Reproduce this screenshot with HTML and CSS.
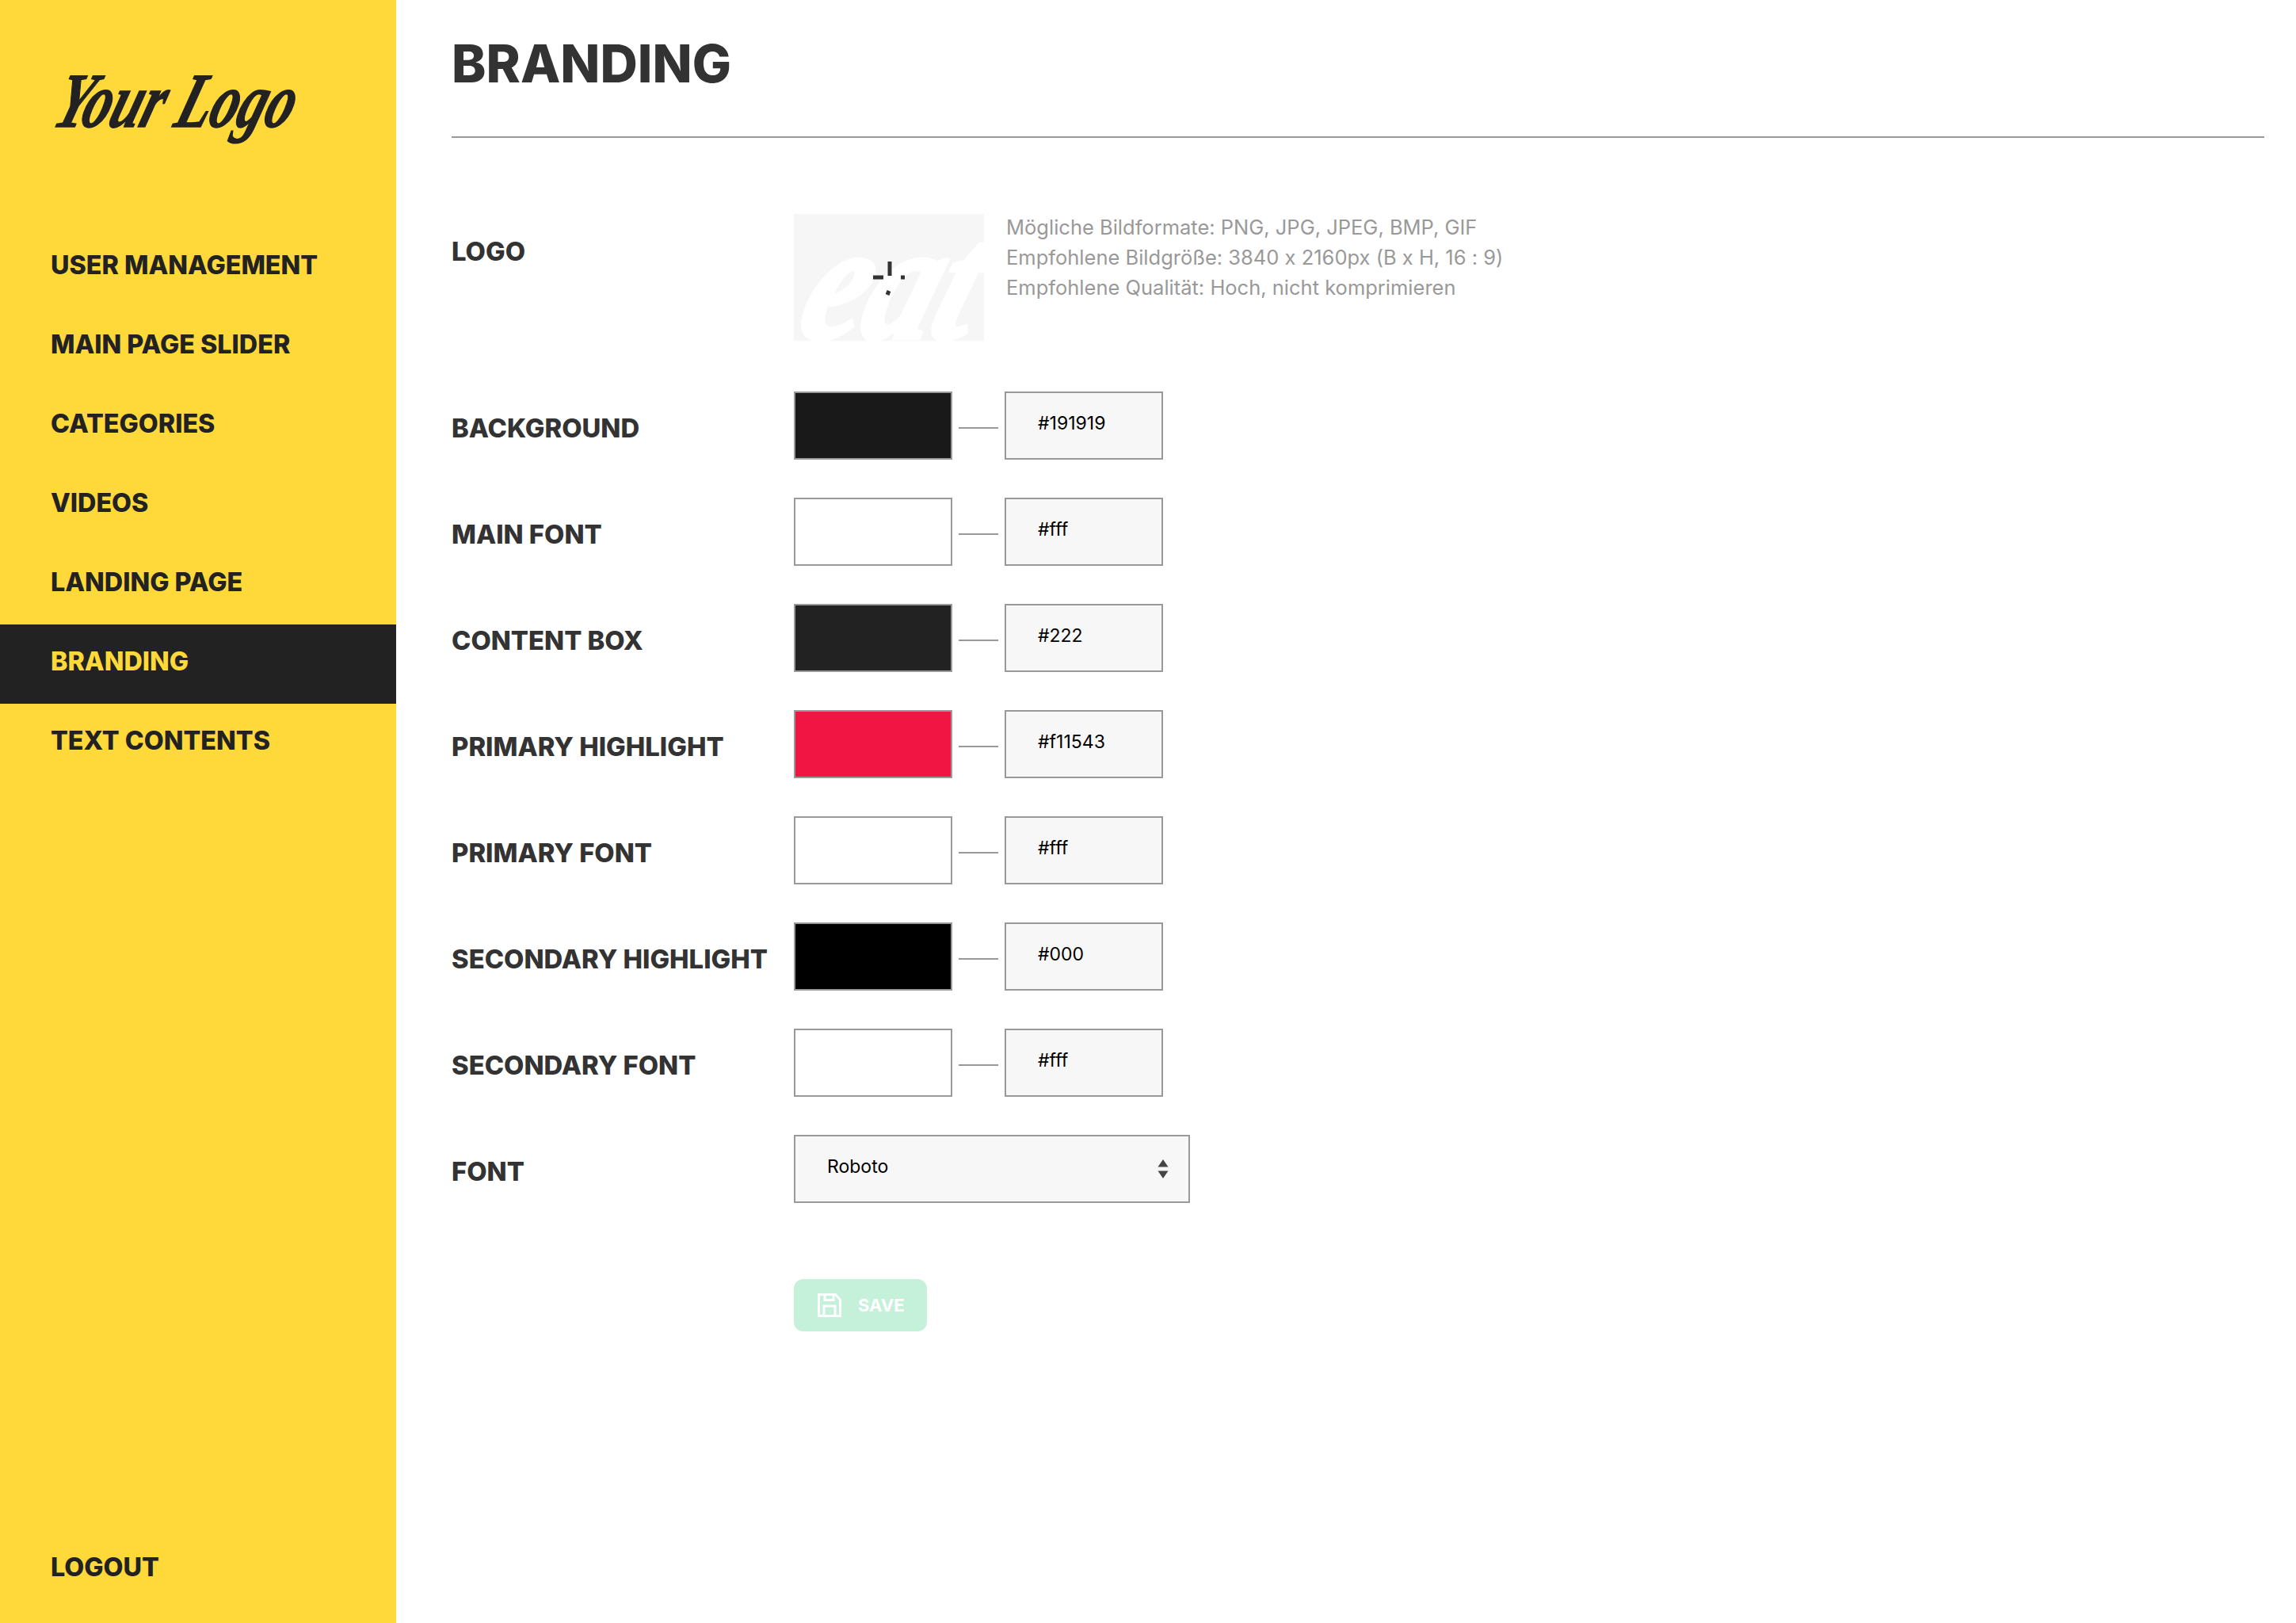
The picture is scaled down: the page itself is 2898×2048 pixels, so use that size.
FILE: index.html
```html
<!DOCTYPE html>
<html lang="de">
<head>
    <meta charset="UTF-8">
    <title>Branding</title>
    <link rel="stylesheet" href="styles.css">
</head>
<body>
    <aside class="sidebar">
        <div class="logo">
            <svg width="500" height="150" viewBox="0 0 500 150">
                <text class="logo-text" transform="translate(64 90) skewX(-18)" textLength="300" lengthAdjust="spacingAndGlyphs">Your Logo</text>
            </svg>
        </div>
        <nav class="menu">
            <a href="#">USER MANAGEMENT</a>
            <a href="#">MAIN PAGE SLIDER</a>
            <a href="#">CATEGORIES</a>
            <a href="#">VIDEOS</a>
            <a href="#">LANDING PAGE</a>
            <a href="#" class="active">BRANDING</a>
            <a href="#">TEXT CONTENTS</a>
        </nav>
        <a href="#" class="logout">LOGOUT</a>
    </aside>

    <main class="content">
        <header class="page-header">
            <h1>BRANDING</h1>
        </header>

        <div class="form">
            <div class="row row-logo">
                <div class="label">LOGO</div>
                <div class="logo-preview">
                    <svg width="240" height="160" viewBox="0 0 240 160">
                        <rect width="240" height="160" fill="#f6f6f6"/>
                        <text class="preview-text" transform="translate(0 156) skewX(-18) scale(1.1 1.3)">eat</text>
                        <path d="M121 60v18M100 80h13M135 80h5M120 97l-2 5" stroke="#333" stroke-width="5" fill="none"/>
                    </svg>
                </div>
                <div class="hint">
                    <p>Mögliche Bildformate: PNG, JPG, JPEG, BMP, GIF</p>
                    <p>Empfohlene Bildgröße: 3840 x 2160px (B x H, 16 : 9)</p>
                    <p>Empfohlene Qualität: Hoch, nicht komprimieren</p>
                </div>
            </div>

            <div class="row">
                <div class="label">BACKGROUND</div>
                <div class="swatch swatch-bg"></div>
                <div class="dash"></div>
                <div class="field">#191919</div>
            </div>
            <div class="row">
                <div class="label">MAIN FONT</div>
                <div class="swatch"></div>
                <div class="dash"></div>
                <div class="field">#fff</div>
            </div>
            <div class="row">
                <div class="label">CONTENT BOX</div>
                <div class="swatch swatch-box"></div>
                <div class="dash"></div>
                <div class="field">#222</div>
            </div>
            <div class="row">
                <div class="label">PRIMARY HIGHLIGHT</div>
                <div class="swatch swatch-primary"></div>
                <div class="dash"></div>
                <div class="field">#f11543</div>
            </div>
            <div class="row">
                <div class="label">PRIMARY FONT</div>
                <div class="swatch"></div>
                <div class="dash"></div>
                <div class="field">#fff</div>
            </div>
            <div class="row">
                <div class="label">SECONDARY HIGHLIGHT</div>
                <div class="swatch swatch-secondary"></div>
                <div class="dash"></div>
                <div class="field">#000</div>
            </div>
            <div class="row">
                <div class="label">SECONDARY FONT</div>
                <div class="swatch"></div>
                <div class="dash"></div>
                <div class="field">#fff</div>
            </div>
            <div class="row">
                <div class="label">FONT</div>
                <div class="select">
                    <span>Roboto</span>
                    <svg width="14" height="24" viewBox="0 0 14 24">
                        <path d="M7 0l6.500 9.500H.5zM7 24L.5 14.500h13z" fill="#444"/>
                    </svg>
                </div>
            </div>

            <div class="actions">
                <button class="save" type="button">
                    <svg width="30" height="30" viewBox="0 0 30 30" fill="none" stroke="#fff" stroke-width="3">
                        <path d="M1.500 1.500h21l6 6.500v20.500h-27z"/>
                        <path d="M9 1.500v7h11v-7M8 28.500V16h14v12.500"/>
                    </svg>
                    <span>SAVE</span>
                </button>
            </div>
        </div>
    </main>
</body>
</html>
```

FILE: styles.css
```css
/* Estructura */
* {
    box-sizing: border-box;
}

body {
    font-family: Inter, "Liberation Sans", sans-serif;
    font-feature-settings: "calt" 0;
    background-color: #fff;
    margin: 0;
    display: flex;
    height: 2048px;
    overflow: hidden;
}

/* Sidebar */
.sidebar {
    width: 500px;
    flex: none;
    background-color: #ffd83a;
    display: flex;
    flex-direction: column;
}

.logo {
    height: 288px;
    padding-top: 70px;
}

.logo-text {
    font-family: "Liberation Serif", serif;
    font-style: italic;
    font-weight: bold;
    font-size: 98px;
    fill: #222;
    stroke: #222;
    stroke-width: 1.500px;
}

.menu {
    flex: 1;
}

.menu a,
.logout {
    display: block;
    height: 100px;
    line-height: 94px;
    padding-left: 64px;
    color: #222;
    font-size: 32.300px;
    font-weight: 800;
    text-decoration: none;
}

.menu a.active {
    background-color: #222;
    color: #ffd83a;
}

.logout {
    margin-bottom: 17px;
}

/* Contenido */
.content {
    flex: 1;
    padding: 0 40px 0 70px;
}

.page-header {
    height: 174px;
    border-bottom: 2px solid #999;
    padding-top: 35px;
}

h1 {
    margin: 0;
    color: #333;
    font-size: 65.500px;
    line-height: 92px;
    font-weight: 800;
}

.form {
    padding-top: 96px;
}

.row {
    display: flex;
    align-items: center;
    height: 86px;
    margin-bottom: 48px;
}

.row-logo {
    align-items: flex-start;
    height: 160px;
    margin-bottom: 64px;
}

.label {
    width: 432px;
    flex: none;
    color: #333;
    font-size: 32.800px;
    font-weight: 800;
    padding-top: 6px;
}

.row-logo .label {
    padding-top: 27px;
}

.logo-preview {
    width: 240px;
    height: 160px;
    flex: none;
}

.logo-preview svg {
    display: block;
}

.preview-text {
    font-family: "Liberation Serif", serif;
    font-style: italic;
    font-weight: bold;
    font-size: 160px;
    fill: #fff;
    stroke: #fff;
    stroke-width: 5px;
}

.hint {
    padding: 0 0 0 28px;
    margin-top: -2px;
    color: #999;
    font-size: 25.500px;
}

.hint p {
    margin: 0;
    height: 38px;
    line-height: 38px;
}

.swatch {
    width: 200px;
    height: 86px;
    flex: none;
    border: 2px solid #999;
    background-color: #fff;
}

.swatch-bg {
    background-color: #191919;
}

.swatch-box {
    background-color: #222;
}

.swatch-primary {
    background-color: #f11543;
}

.swatch-secondary {
    background-color: #000;
}

.dash {
    width: 50px;
    height: 2px;
    margin: 6px 8px 0;
    background-color: #999;
}

.field {
    width: 200px;
    height: 86px;
    flex: none;
    border: 2px solid #999;
    background-color: #f7f7f7;
    color: #000;
    font-size: 23px;
    line-height: 77px;
    padding-left: 40px;
}

.select {
    width: 500px;
    height: 86px;
    flex: none;
    border: 2px solid #999;
    background-color: #f7f7f7;
    color: #000;
    font-size: 23px;
    padding: 0 25px 0 40px;
    display: flex;
    align-items: center;
    justify-content: space-between;
}

.select span {
    margin-top: -6px;
}

.actions {
    padding: 48px 0 0 432px;
}

.save {
    display: flex;
    align-items: center;
    gap: 21px;
    width: 168px;
    height: 66px;
    padding: 0 0 0 30px;
    border: none;
    border-radius: 12px;
    background-color: #c5f0d9;
    color: #fff;
    font-family: inherit;
    font-size: 22px;
    font-weight: 700;
}
```
